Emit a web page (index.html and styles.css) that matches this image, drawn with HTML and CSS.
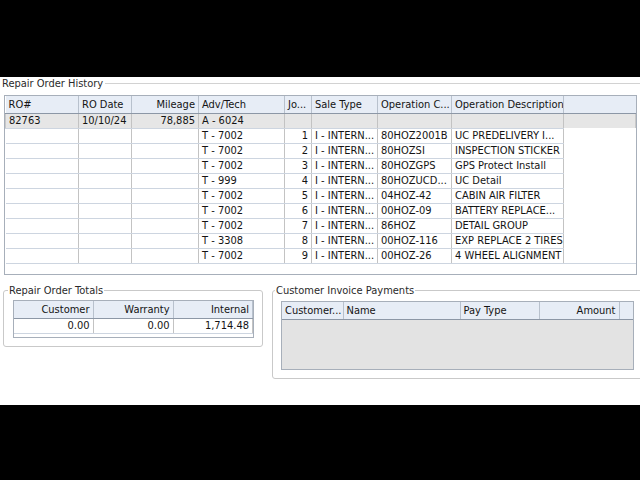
FILE: index.html
```html
<!DOCTYPE html>
<html>
<head>
<meta charset="utf-8">
<link rel="stylesheet" href="styles.css">
</head>
<body>
<div class="screen">
  <fieldset class="history">
    <legend>Repair Order History</legend>
    <div class="grid-box history-box">
      <table class="grid">
        <colgroup>
          <col style="width:73px"><col style="width:53px"><col style="width:67px"><col style="width:86px"><col style="width:27px"><col style="width:66px"><col style="width:74px"><col style="width:112px"><col>
        </colgroup>
        <thead>
          <tr><th>RO#</th><th>RO Date</th><th class="r">Mileage</th><th>Adv/Tech</th><th>Jo...</th><th>Sale Type</th><th>Operation C...</th><th>Operation Description</th><th class="filler"></th></tr>
        </thead>
        <tbody>
          <tr class="group"><td>82763</td><td>10/10/24</td><td class="r">78,885</td><td>A - 6024</td><td></td><td></td><td></td><td></td><td class="filler"></td></tr>
          <tr><td></td><td></td><td></td><td>T - 7002</td><td class="r">1</td><td>I - INTERN...</td><td>80HOZ2001B</td><td>UC PREDELIVERY I...</td><td class="filler"></td></tr>
          <tr><td></td><td></td><td></td><td>T - 7002</td><td class="r">2</td><td>I - INTERN...</td><td>80HOZSI</td><td>INSPECTION STICKER</td><td class="filler"></td></tr>
          <tr><td></td><td></td><td></td><td>T - 7002</td><td class="r">3</td><td>I - INTERN...</td><td>80HOZGPS</td><td>GPS Protect Install</td><td class="filler"></td></tr>
          <tr><td></td><td></td><td></td><td>T - 999</td><td class="r">4</td><td>I - INTERN...</td><td>80HOZUCD...</td><td>UC Detail</td><td class="filler"></td></tr>
          <tr><td></td><td></td><td></td><td>T - 7002</td><td class="r">5</td><td>I - INTERN...</td><td>04HOZ-42</td><td>CABIN AIR FILTER</td><td class="filler"></td></tr>
          <tr><td></td><td></td><td></td><td>T - 7002</td><td class="r">6</td><td>I - INTERN...</td><td>00HOZ-09</td><td>BATTERY REPLACE...</td><td class="filler"></td></tr>
          <tr><td></td><td></td><td></td><td>T - 7002</td><td class="r">7</td><td>I - INTERN...</td><td>86HOZ</td><td>DETAIL GROUP</td><td class="filler"></td></tr>
          <tr><td></td><td></td><td></td><td>T - 3308</td><td class="r">8</td><td>I - INTERN...</td><td>00HOZ-116</td><td>EXP REPLACE 2 TIRES</td><td class="filler"></td></tr>
          <tr class="last"><td></td><td></td><td></td><td>T - 7002</td><td class="r">9</td><td>I - INTERN...</td><td>00HOZ-26</td><td>4 WHEEL ALIGNMENT</td><td class="filler"></td></tr>
        </tbody>
      </table>
    </div>
  </fieldset>

  <div class="bottom">
    <fieldset class="group totals">
      <legend>Repair Order Totals</legend>
      <div class="grid-box totals-box">
        <table class="grid">
          <colgroup><col style="width:79px"><col style="width:80px"><col></colgroup>
          <thead>
            <tr><th class="r">Customer</th><th class="r">Warranty</th><th class="r">Internal</th></tr>
          </thead>
          <tbody>
            <tr><td class="r">0.00</td><td class="r">0.00</td><td class="r">1,714.48</td></tr>
          </tbody>
        </table>
      </div>
    </fieldset>

    <fieldset class="group payments">
      <legend>Customer Invoice Payments</legend>
      <div class="grid-box payments-box">
        <table class="grid">
          <colgroup><col style="width:61px"><col style="width:117px"><col style="width:79px"><col style="width:80px"><col></colgroup>
          <thead>
            <tr><th>Customer...</th><th>Name</th><th>Pay Type</th><th class="r">Amount</th><th class="filler"></th></tr>
          </thead>
        </table>
      </div>
    </fieldset>
  </div>
</div>
</body>
</html>
```

FILE: styles.css
```css
* { box-sizing: border-box; }

body {
  margin: 0;
  background: #000;
  font-family: "DejaVu Sans Condensed", "DejaVu Sans", sans-serif;
  font-stretch: condensed;
  font-size: 11px;
  color: #141414;
}

.screen {
  margin-top: 77px;
  height: 328px;
  background: #fff;
  overflow: hidden;
}

fieldset {
  margin: 0;
  min-width: 0;
}

legend {
  padding: 0 2px;
  line-height: 13px;
  color: #2a2a2a;
}

.history {
  border: 0;
  border-top: 1px solid #d2d2d2;
  padding: 5px 3px 0 4px;
}

.history legend {
  margin-left: -4px;
}

.grid-box {
  border: 1px solid #a7afba;
  background: #fff;
  overflow: hidden;
}

.history-box {
  width: 633px;
  height: 180px;
}

.grid {
  width: 100%;
  table-layout: fixed;
  border-collapse: collapse;
  border-spacing: 0;
}

.grid th,
.grid td {
  padding: 0 3px;
  white-space: nowrap;
  overflow: hidden;
  text-align: left;
  font-weight: normal;
}

.grid th {
  height: 17px;
  background: #e7edf6;
  border-right: 1px solid #b8c1cd;
  border-bottom: 1px solid #8c97a6;
}

.grid td {
  height: 15px;
  border-right: 1px solid #c3c3c3;
  border-bottom: 1px solid #cdd5e0;
}

.grid .r { text-align: right; }

.grid th.filler { border-right: 0; }

.grid td.filler {
  border-right: 0;
  border-bottom-color: transparent;
}

.grid tr.group td {
  background: #e6e6e6;
}

.grid tr.last td.filler {
  border-bottom-color: #cdd5e0;
}

.bottom {
  display: flex;
  align-items: flex-start;
  gap: 9px;
  margin-top: 9px;
  padding-left: 3px;
}

.group {
  flex-shrink: 0;
  border: 1px solid #c9c9c9;
  border-radius: 3px;
}

.totals {
  width: 260px;
  padding: 3px 8px 8px 9px;
}

.totals legend {
  margin-left: -5px;
  padding: 0 1px;
}

.totals-box {
  height: 38px;
}

.payments {
  width: 380px;
  padding: 4px 8px 8px 8px;
}

.payments legend {
  margin-left: -6px;
  padding: 0 1px;
}

.payments-box {
  width: 353px;
  height: 69px;
  background: #e3e3e3;
}

.payments-box th.filler { border-right: 0; }
```
